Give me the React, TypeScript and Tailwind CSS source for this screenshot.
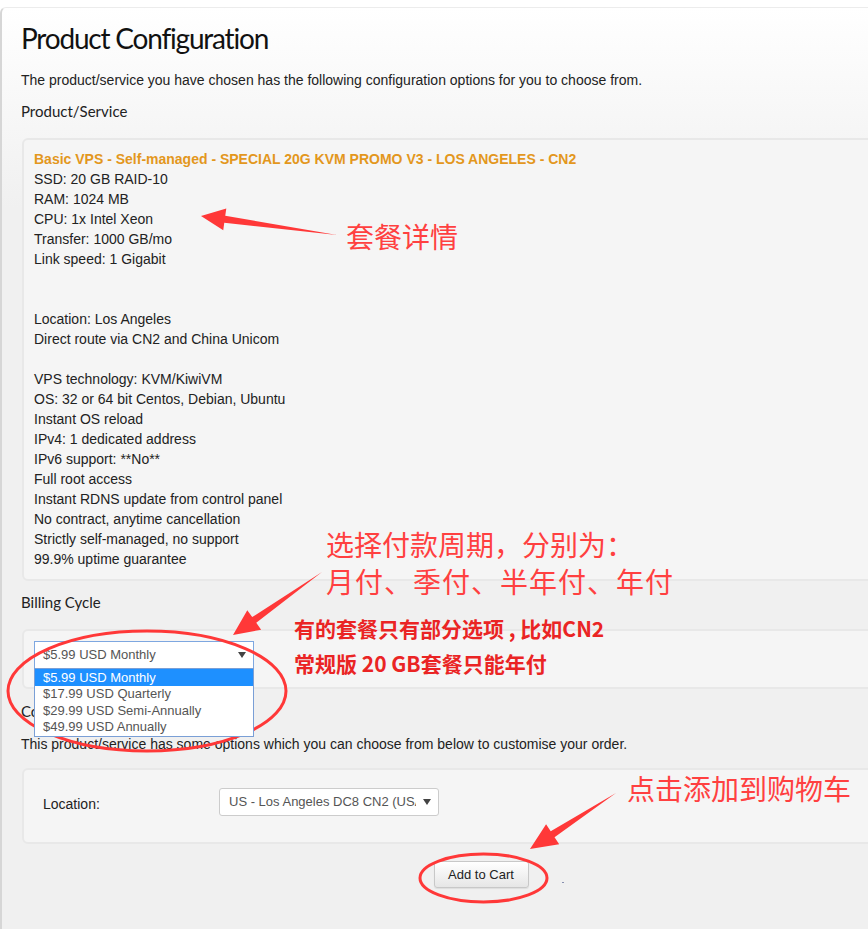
import React from "react";

const serviceLines: string[] = [
  "SSD: 20 GB RAID-10",
  "RAM: 1024 MB",
  "CPU: 1x Intel Xeon",
  "Transfer: 1000 GB/mo",
  "Link speed: 1 Gigabit",
  "",
  "",
  "Location: Los Angeles",
  "Direct route via CN2 and China Unicom",
  "",
  "VPS technology: KVM/KiwiVM",
  "OS: 32 or 64 bit Centos, Debian, Ubuntu",
  "Instant OS reload",
  "IPv4: 1 dedicated address",
  "IPv6 support: **No**",
  "Full root access",
  "Instant RDNS update from control panel",
  "No contract, anytime cancellation",
  "Strictly self-managed, no support",
  "99.9% uptime guarantee",
];

const cycles = [
  "$5.99 USD Monthly",
  "$17.99 USD Quarterly",
  "$29.99 USD Semi-Annually",
  "$49.99 USD Annually",
];

const heading = { fontFamily: 'Lato, "Open Sans", sans-serif' };
const body = { fontFamily: '"Liberation Sans", Arial, sans-serif' };
const cjk = { fontFamily: '"Noto Sans CJK SC", "Noto Sans", sans-serif' };

function Caret() {
  return (
    <svg width="8" height="6" viewBox="0 0 8 6" className="shrink-0">
      <polygon points="0,0 8,0 4,6" fill="#444" />
    </svg>
  );
}

// tapered annotation arrow, thin at the tail and wide at the head
function arrowPoints(tx: number, ty: number, hx: number, hy: number, headLen = 26, headW = 12, shaftW = 3.5) {
  const dx = hx - tx;
  const dy = hy - ty;
  const len = Math.hypot(dx, dy);
  const ux = dx / len;
  const uy = dy / len;
  const nx = -uy;
  const ny = ux;
  const bx = hx - ux * headLen;
  const by = hy - uy * headLen;
  const pts = [
    [hx, hy],
    [bx + nx * headW, by + ny * headW],
    [bx + nx * shaftW, by + ny * shaftW],
    [tx, ty],
    [bx - nx * shaftW, by - ny * shaftW],
    [bx - nx * headW, by - ny * headW],
  ];
  return pts.map((p) => p.join(",")).join(" ");
}

function Annotations() {
  return (
    <div className="absolute top-0 left-0 w-[868px] h-[929px] pointer-events-none">
      <svg width="868" height="929" className="absolute top-0 left-0">
        <polygon points={arrowPoints(337, 235, 201, 216, 24, 11, 3.5)} fill="#ff3838" />
        <polygon points={arrowPoints(322, 572, 233, 635, 26, 12, 3.5)} fill="#ff3838" />
        <polygon points={arrowPoints(616, 793, 530, 849, 27, 12, 3.5)} fill="#ff3838" />
        <ellipse cx="147" cy="691" rx="139" ry="60" fill="none" stroke="#ff3838" strokeWidth="3" />
        <ellipse cx="483.5" cy="878" rx="63.5" ry="24" fill="none" stroke="#ff3838" strokeWidth="3" />
      </svg>
      <span style={cjk} className="absolute left-[346px] top-[222px] text-[28px] leading-none text-[#ff4040] whitespace-nowrap">
        套餐详情
      </span>
      <div style={cjk} className="absolute left-[326px] top-[530px] flex flex-col gap-[9px] text-[28px] leading-none text-[#ff4040] whitespace-nowrap">
        <span>选择付款周期，分别为：</span>
        <span className="tracking-[1px]">月付、季付、半年付、年付</span>
      </div>
      <div style={cjk} className="absolute left-[294px] top-[618px] flex flex-col gap-[14px] text-[21px] leading-none font-bold text-[#ea2424] whitespace-nowrap">
        <span>有的套餐只有部分选项 , 比如CN2</span>
        <span>常规版 20 GB套餐只能年付</span>
      </div>
      <span style={cjk} className="absolute left-[627px] top-[774px] text-[28px] leading-none text-[#ff4040] whitespace-nowrap">
        点击添加到购物车
      </span>
    </div>
  );
}

export default function App() {
  return (
    <div className="relative w-full min-h-screen overflow-hidden bg-white">
      <div className="mt-[7px] w-[960px] min-h-[922px] border-l-2 border-t border-[#d6d6d6] border-t-[#ececec] rounded-tl-md bg-[linear-gradient(to_bottom,#ffffff_0px,#f6f6f6_120px,#f0f0f0_200px)] pl-[19px] pt-[13px] text-[#222]">
        <h1 style={heading} className="text-[28px] leading-[34px] tracking-[-1.2px] text-[#111]">
          Product Configuration
        </h1>
        <p style={body} className="mt-[16px] text-[14px] leading-[18px]">
          The product/service you have chosen has the following configuration options for you to choose from.
        </p>

        {/* Product/Service */}
        <h2 style={heading} className="mt-[12px] text-[15px] leading-[20px] text-[#222]">
          Product/Service
        </h2>
        <div style={body} className="ml-px mt-[17px] w-[918px] border-2 border-[#e8e8e8] rounded-md bg-[#f5f5f5] pl-[10px] pt-[9px] pb-[10px] text-[14px] leading-[20px]">
          <div className="font-bold text-[#e3971d]">
            Basic VPS - Self-managed - SPECIAL 20G KVM PROMO V3 - LOS ANGELES - CN2
          </div>
          {serviceLines.map((line, i) => (
            <div key={i} className="h-[20px]">
              {line}
            </div>
          ))}
        </div>

        {/* Billing Cycle */}
        <h2 style={heading} className="mt-[11px] text-[15px] leading-[20px]">
          Billing Cycle
        </h2>
        <div className="ml-px mt-[17px] w-[918px] border-2 border-[#e8e8e8] rounded-md bg-[#f5f5f5] pl-[10px] pt-[10px] pb-[18px]">
          <div style={body} className="relative w-[220px]">
            <div className="h-[28px] flex items-center justify-between bg-white border border-[#7ea7e0] pl-[8px] pr-[7px] text-[13px] text-[#555]">
              <span>$5.99 USD Monthly</span>
              <Caret />
            </div>
            <ul className="absolute left-0 top-[27px] z-10 w-[220px] bg-white border border-[#7a9fd6] text-[13px] text-[#555]">
              {cycles.map((c, i) => (
                <li
                  key={c}
                  className={
                    i === 0
                      ? "h-[17px] leading-[17px] pl-[8px] bg-[#1e90ff] text-white"
                      : "h-[16.5px] leading-[16.5px] pl-[8px]"
                  }
                >
                  {c}
                </li>
              ))}
            </ul>
          </div>
        </div>

        {/* Configurable Options */}
        <h2 style={heading} className="mt-[12px] text-[15px] leading-[20px]">
          Configurable Options
        </h2>
        <p style={body} className="mt-[14px] text-[14px] leading-[18px]">
          This product/service has some options which you can choose from below to customise your order.
        </p>
        <div style={body} className="ml-px mt-[15px] w-[918px] border-2 border-[#e8e8e8] rounded-md bg-[#f5f5f5] pl-[19px] pt-[18px] pb-[26px] flex items-center text-[14px]">
          <div className="w-[176px] pt-[4px] text-[#222]">Location:</div>
          <div className="w-[220px] h-[28px] flex items-center bg-white border border-[#cccccc] rounded-[3px] pl-[9px] pr-[7px] text-[13px] text-[#555]">
            <span className="w-[187px] overflow-hidden whitespace-nowrap">US - Los Angeles DC8 CN2 (USA)</span>
            <span className="ml-auto">
              <Caret />
            </span>
          </div>
        </div>

        <div className="ml-px w-[918px] mt-[17px] flex justify-center">
          <div className="relative">
            <button
              style={body}
              className="w-[95px] h-[27px] border border-[#c8c8c8] rounded-[3px] bg-[linear-gradient(to_bottom,#ffffff,#e6e6e6)] text-[13px] text-[#222] shadow-[0_1px_1px_rgba(0,0,0,0.08)]"
            >
              Add to Cart
            </button>
            <span className="absolute left-[128px] top-[21px] w-[2px] h-px bg-[#8890b0]" />
          </div>
        </div>
      </div>
      <Annotations />
    </div>
  );
}
